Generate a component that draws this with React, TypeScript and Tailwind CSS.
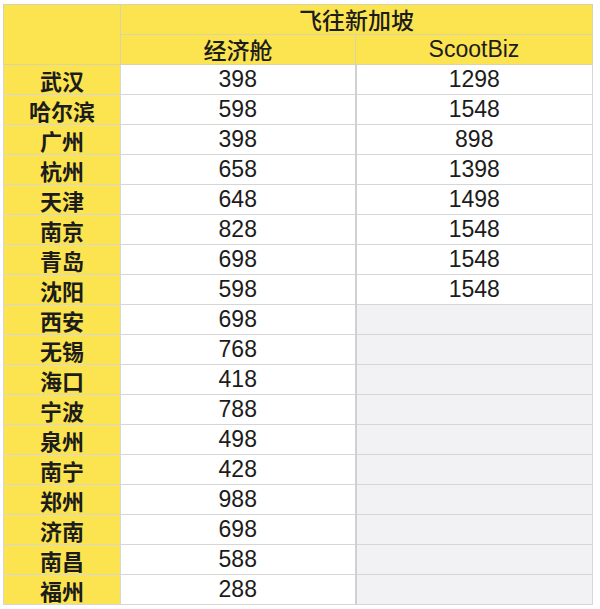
const rows: [string, string, string?][] = [
  ["武汉", "398", "1298"],
  ["哈尔滨", "598", "1548"],
  ["广州", "398", "898"],
  ["杭州", "658", "1398"],
  ["天津", "648", "1498"],
  ["南京", "828", "1548"],
  ["青岛", "698", "1548"],
  ["沈阳", "598", "1548"],
  ["西安", "698"],
  ["无锡", "768"],
  ["海口", "418"],
  ["宁波", "788"],
  ["泉州", "498"],
  ["南宁", "428"],
  ["郑州", "988"],
  ["济南", "698"],
  ["南昌", "588"],
  ["福州", "288"],
];

const cjk = "font-['Noto_Sans_CJK_SC',sans-serif]";
const latin = "font-['Liberation_Sans','Noto_Sans_CJK_SC',sans-serif]";

export default function App() {
  return (
    <div className="w-[600px] h-[609px] bg-white pt-[4px] pl-[3px] overflow-hidden">
      <table className="table-fixed border-collapse w-[590px] text-[#1c1c1c]">
        <colgroup>
          <col className="w-[117px]" />
          <col className="w-[235px]" />
          <col className="w-[237px]" />
        </colgroup>
        <thead>
          <tr className="h-[30px]">
            <th
              rowSpan={2}
              className="bg-[#fbe44f] border border-[#d9d4a8]"
            />
            <th
              colSpan={2}
              className={`bg-[#fbe44f] border border-[#d9d4a8] text-[23px] leading-none font-medium ${cjk}`}
            >
              飞往新加坡
            </th>
          </tr>
          <tr className="h-[30px]">
            <th
              className={`bg-[#fbe44f] border border-[#d9d4a8] text-[23px] leading-none font-medium ${cjk}`}
            >
              经济舱
            </th>
            <th
              className={`bg-[#fbe44f] border border-[#d9d4a8] text-[23px] leading-none font-normal ${latin}`}
            >
              ScootBiz
            </th>
          </tr>
        </thead>
        <tbody>
          {rows.map(([city, economy, biz]) => (
            <tr key={city} className="h-[30px]">
              <td
                className={`bg-[#fbe44f] border border-[#d6d6d6] text-center text-[22px] leading-none font-bold ${cjk}`}
              >
                {city}
              </td>
              <td
                className={`bg-white border border-[#d6d6d6] border-r-2 border-r-[#d0d0d0] text-center text-[23px] leading-none ${latin}`}
              >
                {economy}
              </td>
              <td
                className={`border border-[#d6d6d6] text-center text-[23px] leading-none ${latin} ${
                  biz ? "bg-white" : "bg-[#f2f1f4]"
                }`}
              >
                {biz}
              </td>
            </tr>
          ))}
        </tbody>
      </table>
    </div>
  );
}
